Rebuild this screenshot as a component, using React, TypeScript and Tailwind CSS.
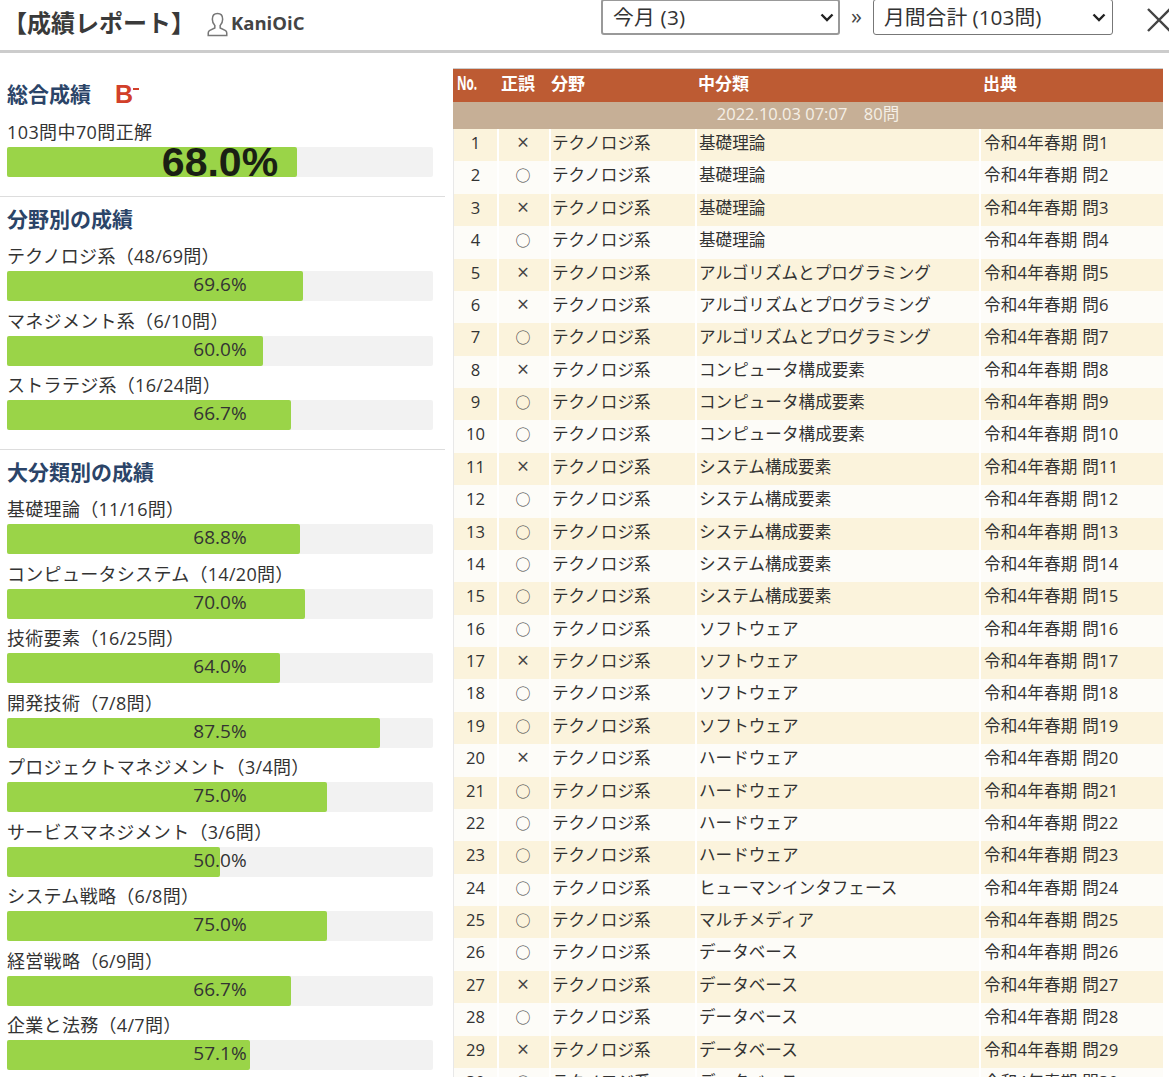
import React from "react";

const F = { fontFamily: '"Open Sans", "Noto Sans CJK JP", sans-serif' };

const wrong = new Set([1, 3, 5, 6, 8, 11, 17, 20, 27, 29]);
const cats: [number, string][] = [
  [4, "基礎理論"],
  [3, "アルゴリズムとプログラミング"],
  [3, "コンピュータ構成要素"],
  [5, "システム構成要素"],
  [4, "ソフトウェア"],
  [4, "ハードウェア"],
  [1, "ヒューマンインタフェース"],
  [1, "マルチメディア"],
  [5, "データベース"],
];
const rows: string[] = cats.flatMap(([n, c]) => Array.from({ length: n }, () => c));

const field = [
  { label: "テクノロジ系（48/69問）", pct: "69.6%", w: 296 },
  { label: "マネジメント系（6/10問）", pct: "60.0%", w: 256 },
  { label: "ストラテジ系（16/24問）", pct: "66.7%", w: 284 },
];
const major = [
  { label: "基礎理論（11/16問）", pct: "68.8%", w: 293 },
  { label: "コンピュータシステム（14/20問）", pct: "70.0%", w: 298 },
  { label: "技術要素（16/25問）", pct: "64.0%", w: 273 },
  { label: "開発技術（7/8問）", pct: "87.5%", w: 373 },
  { label: "プロジェクトマネジメント（3/4問）", pct: "75.0%", w: 320 },
  { label: "サービスマネジメント（3/6問）", pct: "50.0%", w: 213 },
  { label: "システム戦略（6/8問）", pct: "75.0%", w: 320 },
  { label: "経営戦略（6/9問）", pct: "66.7%", w: 284 },
  { label: "企業と法務（4/7問）", pct: "57.1%", w: 243 },
];

function Bar({ label, pct, w }: { label: string; pct: string; w: number }) {
  return (
    <div className="h-[64.5px]">
      <div className="h-[34.5px] pt-[7.5px] text-[18px] leading-[24px] tracking-[0.3px] text-[#333] whitespace-nowrap">{label}</div>
      <div className="relative h-[30px] w-[426px] rounded-[2px] bg-[#f2f2f2]">
        <div className="h-full rounded-[2px] bg-[#9ad448]" style={{ width: w }} />
        <div className="absolute inset-0 text-center text-[19px] leading-[27px] text-[#333]">{pct}</div>
      </div>
    </div>
  );
}

const Heading = ({ children }: { children: React.ReactNode }) => (
  <span className="text-[21px] font-bold text-[#2b4468]">{children}</span>
);

export default function App() {
  return (
    <div style={F} className="h-[1077px] w-[1169px] overflow-hidden bg-white text-[#333]">
      <header className="flex h-[53px] border-b-[3px] border-[#cccccc]">
        <div className="flex w-[601px] shrink-0 items-center pb-[4px] pl-[3px]">
          <span className="text-[24px] font-bold text-[#3a3a3a] whitespace-nowrap leading-[34px]">【成績レポート】</span>
          <svg className="ml-[12px] mt-[2px] shrink-0" width="21" height="25" viewBox="0 0 22 26" fill="none" stroke="#777" strokeWidth="1.6">
            <path d="M11 1.500c-3.400 0-5.400 2.600-5.400 6 0 2.600 1 5 2.600 6.500v2.600l-5.200 2.600c-1.200.7-1.700 1.500-1.700 2.600v2.700h19.400v-2.700c0-1.100-.5-1.900-1.700-2.600l-5.200-2.600V14c1.600-1.500 2.600-3.900 2.600-6.500 0-3.400-2-6-5.400-6z" />
          </svg>
          <span className="ml-[3px] text-[18.5px] font-bold text-[#444] leading-[28px]">KaniOiC</span>
        </div>
        <div className="flex h-[36px] w-[239px] shrink-0 items-center justify-between rounded-[3px] border-[2px] border-[#999] pl-[10px] pr-[3px] -mt-[1px] text-[20.8px] leading-[34px] tracking-[0.2px] text-[#333]">
          <span>今月 (3)</span>
          <svg width="16" height="16" viewBox="0 0 16 16" fill="none" stroke="#222" strokeWidth="2.400"><path d="M2.500 5.500 8 11l5.500-5.500" /></svg>
        </div>
        <div className="w-[33px] shrink-0 text-center text-[22px] leading-[30px] text-[#444]">»</div>
        <div className="flex h-[36px] w-[240px] shrink-0 items-center justify-between rounded-[3px] border border-[#777] pl-[10px] pr-[5px] -mt-[1px] text-[20.8px] leading-[34px] text-[#333]">
          <span>月間合計 (103問)</span>
          <svg width="16" height="16" viewBox="0 0 16 16" fill="none" stroke="#222" strokeWidth="2.400"><path d="M2.500 5.500 8 11l5.500-5.500" /></svg>
        </div>
        <svg className="ml-[34px] mt-[8px] shrink-0" width="24" height="24" viewBox="0 0 24 24" stroke="#444" strokeWidth="2.400"><path d="M1 1l22 22M23 1L1 23" /></svg>
      </header>

      <div className="flex">
        <aside className="w-[453px] shrink-0">
          <div className="w-[445px] border-b border-[#ddd] pl-[7px] pb-[19px]">
            <div className="flex h-[55px] items-end leading-[28px]">
              <Heading>総合成績</Heading>
              <span className="ml-[24px] text-[25px] font-bold leading-[28px] text-[#d2402a]" style={{ fontFamily: '"Liberation Sans", sans-serif' }}>B</span>
              <span className="mb-[18px] h-[2px] w-[6px] bg-[#d2402a]" />
            </div>
            <div className="mt-[12px] h-[24px] text-[18px] leading-[24px] tracking-[0.4px] text-[#333]">103問中70問正解</div>
            <div className="relative mt-[3px] h-[30px] w-[426px] rounded-[2px] bg-[#f2f2f2]">
              <div className="h-full w-[290px] rounded-[2px] bg-[#9ad448]" />
              <div className="absolute inset-0 text-center text-[41px] font-bold leading-[30px] text-[#1a1f14]" style={{ fontFamily: '"Liberation Sans", sans-serif' }}>68.0%</div>
            </div>
          </div>
          <div className="w-[445px] border-b border-[#ddd] pl-[7px] pb-[19px]">
            <div className="h-[39.7px] pt-[2px] leading-[40px]"><Heading>分野別の成績</Heading></div>
            {field.map((b) => <Bar key={b.label} {...b} />)}
          </div>
          <div className="pl-[7px]">
            <div className="h-[39.7px] pt-[2px] leading-[40px]"><Heading>大分類別の成績</Heading></div>
            {major.map((b) => <Bar key={b.label} {...b} />)}
          </div>
        </aside>

        <main className="mt-[15px] w-[710px] shrink-0">
          <div className="flex h-[34px] items-center border-t border-[#ccc] bg-[#bd5b33] pb-[4px] text-[17px] font-bold leading-[24px] text-white">
            <div className="w-[44px] pl-[4px]"><span className="inline-block origin-left scale-x-[0.62] text-[19px]">No.</span></div>
            <div className="w-[52px] pl-[4px]">正誤</div>
            <div className="w-[146px] pl-[2px]">分野</div>
            <div className="w-[284px] pl-[3px]">中分類</div>
            <div className="pl-[4px]">出典</div>
          </div>
          <div className="h-[27px] bg-[#c6af96] text-center text-[16.5px] leading-[24px] text-[#f5efe6]">2022.10.03 07:07　80問</div>
          <div className="border-l border-[#e8e8e8]">
            {[...rows, "データベース"].map((c, i) => {
              const n = i + 1;
              const bg = n % 2 ? "bg-[#fbf3dc]" : "bg-[#fdfcf8]";
              return (
                <div key={n} className={`flex h-[32.39px] text-[16.6px] leading-[27px] text-[#333] ${bg}`}>
                  <div className="w-[43px] text-center">{n}</div>
                  <div className="w-[52px] border-l-2 border-white pr-[2px] text-center text-[#444]">
                    {wrong.has(n) ? <span className="text-[21px]">×</span> : <span className="text-[15px]">○</span>}
                  </div>
                  <div className="w-[146px] border-l-2 border-white pl-[1px] whitespace-nowrap">テクノロジ系</div>
                  <div className="w-[284px] border-l-2 border-white pl-[2px] whitespace-nowrap">{c}</div>
                  <div className="w-[183px] border-l-2 border-white pl-[3px] tracking-[0.2px] whitespace-nowrap">令和4年春期 問{n}</div>
                </div>
              );
            })}
          </div>
        </main>
      </div>
    </div>
  );
}
